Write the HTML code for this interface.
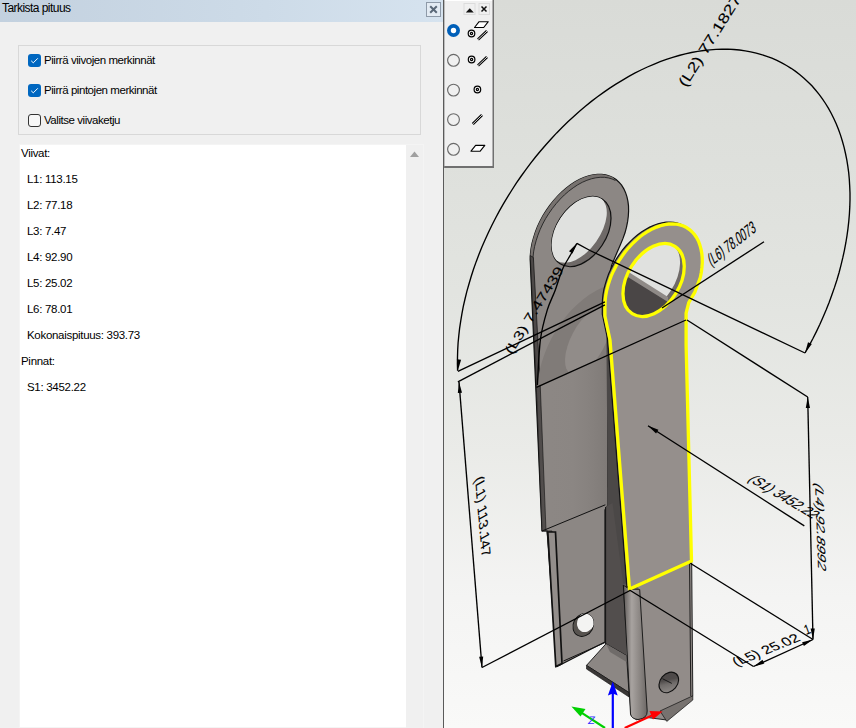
<!DOCTYPE html>
<html><head><meta charset="utf-8">
<style>
html,body{margin:0;padding:0;width:856px;height:728px;overflow:hidden;background:#f0f0f0;font-family:"Liberation Sans",sans-serif;}
.abs{position:absolute;}
#title{left:0;top:0;width:443px;height:22px;background:linear-gradient(90deg,#c3d1df 0%,#cddbe8 60%,#d6e3ef 100%);}
#title span{position:absolute;left:2px;top:1px;font-size:12px;color:#000;letter-spacing:-0.55px;}
#closeb{left:426px;top:2px;width:15px;height:15px;box-sizing:border-box;border:1px solid #8e9aa8;background:#e3ebf3;}
.txt{position:absolute;font-size:11.5px;color:#000;white-space:nowrap;letter-spacing:-0.3px;}
#grp{left:18px;top:45px;width:403px;height:90px;box-sizing:border-box;border:1px solid #d8d8d8;}
.cb{position:absolute;left:28px;width:13px;height:13px;box-sizing:border-box;border-radius:3px;}
.cb.on{background:#0067c0;}
.cb.off{border:1px solid #333;background:#f7f7f7;}
#list{left:19px;top:144px;width:405px;height:584px;background:#fff;box-sizing:border-box;border:1px solid #f4f4f4;}
#sb{left:406px;top:145px;width:17px;height:583px;background:#f0f0f0;}
#divider{left:443px;top:0;width:1px;height:728px;background:#5a5a5a;}
#view{left:444px;top:0;width:412px;height:728px;background:linear-gradient(180deg,#d9dbd7 0%,#e2e4e0 40%,#eaebe8 62%,#f4f4f3 82%,#f9f9f8 100%);overflow:hidden;}
#tb{left:444px;top:0;width:50px;height:168px;}
</style></head><body>
<div id="title" class="abs"><span>Tarkista pituus</span></div>
<div id="closeb" class="abs"><svg width="14" height="14" style="position:absolute;left:0;top:0"><path d="M3.2 3.2L9.8 9.8M9.8 3.2L3.2 9.8" stroke="#5a6878" stroke-width="2"/></svg></div>

<div id="grp" class="abs"></div>
<div class="cb on" style="top:54px"><svg width="13" height="13" style="position:absolute;left:0;top:0"><path d="M3.2 6.8L5.3 8.8L9.8 4.3" fill="none" stroke="#fff" stroke-width="1"/></svg></div>
<div class="txt" style="left:44px;top:54px;letter-spacing:-0.45px">Piirrä viivojen merkinnät</div>
<div class="cb on" style="top:84px"><svg width="13" height="13" style="position:absolute;left:0;top:0"><path d="M3.2 6.8L5.3 8.8L9.8 4.3" fill="none" stroke="#fff" stroke-width="1"/></svg></div>
<div class="txt" style="left:44px;top:84px;letter-spacing:-0.45px">Piirrä pintojen merkinnät</div>
<div class="cb off" style="top:114px"></div>
<div class="txt" style="left:44px;top:114px;letter-spacing:-0.45px">Valitse viivaketju</div>

<div id="list" class="abs"></div>
<div id="sb" class="abs"><svg width="17" height="20" style="position:absolute;left:0;top:0"><path d="M4 12L8.5 6.5L13 12Z" fill="#a0a0a0"/></svg></div>
<div class="txt" style="left:21px;top:147px">Viivat:</div>
<div class="txt" style="left:27px;top:173px">L1: 113.15</div>
<div class="txt" style="left:27px;top:199px">L2: 77.18</div>
<div class="txt" style="left:27px;top:225px">L3: 7.47</div>
<div class="txt" style="left:27px;top:251px">L4: 92.90</div>
<div class="txt" style="left:27px;top:277px">L5: 25.02</div>
<div class="txt" style="left:27px;top:303px">L6: 78.01</div>
<div class="txt" style="left:27px;top:329px">Kokonaispituus: 393.73</div>
<div class="txt" style="left:21px;top:355px">Pinnat:</div>
<div class="txt" style="left:27px;top:381px">S1: 3452.22</div>

<div id="divider" class="abs"></div>
<div id="view" class="abs">
<svg id="model" width="412" height="728" viewBox="444 0 412 728" style="position:absolute;left:0;top:0">
<defs><linearGradient id="cyl" x1="0" x2="1" y1="0" y2="0"><stop offset="0" stop-color="#5e5a58"/><stop offset="0.35" stop-color="#a8a3a0"/><stop offset="0.7" stop-color="#8a8582"/><stop offset="1" stop-color="#6c6765"/></linearGradient></defs>
<path d="M542 531 L530.2 259.5 L530.2 259.5 L530.4 254.3 L531.0 248.9 L532.0 243.4 L533.5 237.8 L535.3 232.2 L537.5 226.6 L540.1 221.0 L543.0 215.6 L546.3 210.4 L549.8 205.4 L553.6 200.6 L557.6 196.1 L561.8 191.9 L566.1 188.2 L570.6 184.8 L575.1 181.8 L579.7 179.3 L584.3 177.3 L588.8 175.8 L593.2 174.8 L597.6 174.3 L601.7 174.3 L605.7 174.9 L609.5 176.0 L612.9 177.5 L616.1 179.6 L619.0 182.2 L621.6 185.2 L623.7 188.6 L625.5 192.4 L626.9 196.6 L627.9 201.1 L628.5 205.9 L628.6 211.0 L628.3 216.3 L627.6 221.7 L626.5 227.2 L625.0 232.8 L623.0 238.4 L620.7 244.0 L615.6 255.7 L611.5 265.6 L608.0 285.0 L608.0 380.0 L607.8 505.0 L605.0 510.0 L605.0 642.0 L557.0 666.6 L548.0 540.0 L547.0 531.0Z" fill="#8c8784" stroke="#111" stroke-width="1.2"/>
<path d="M530.2 259.5 L530.2 259.5 L530.4 254.3 L531.0 248.9 L532.0 243.4 L533.5 237.8 L535.3 232.2 L537.5 226.6 L540.1 221.0 L543.0 215.6 L546.3 210.4 L549.8 205.4 L553.6 200.6 L557.6 196.1 L561.8 191.9 L566.1 188.2 L570.6 184.8 L575.1 181.8 L579.7 179.3 L584.3 177.3 L588.8 175.8 L593.2 174.8 L597.6 174.3 L601.7 174.3 L605.7 174.9 L609.5 176.0 L612.9 177.5 L615.5 180.5 L612.1 179.0 L608.3 177.9 L604.3 177.3 L600.2 177.3 L595.8 177.8 L591.4 178.8 L586.9 180.3 L582.3 182.3 L577.7 184.8 L573.2 187.8 L568.7 191.2 L564.4 194.9 L560.2 199.1 L556.2 203.6 L552.4 208.4 L548.9 213.4 L545.6 218.6 L542.7 224.0 L540.1 229.6 L537.9 235.2 L536.1 240.8 L534.6 246.4 L533.6 251.9 L533.0 257.3 L532.8 262.5Z" fill="#77726f"/>
<path d="M532.8 262.5 L532.8 262.5 L533.0 257.3 L533.6 251.9 L534.6 246.4 L536.1 240.8 L537.9 235.2 L540.1 229.6 L542.7 224.0 L545.6 218.6 L548.9 213.4 L552.4 208.4 L556.2 203.6 L560.2 199.1 L564.4 194.9 L568.7 191.2 L573.2 187.8 L577.7 184.8 L582.3 182.3 L586.9 180.3 L591.4 178.8 L595.8 177.8 L600.2 177.3 L604.3 177.3 L608.3 177.9 L612.1 179.0 L615.5 180.5" fill="none" stroke="#222" stroke-width="0.9"/>
<path d="M530.2 255.5 L536 380 L542 531 L546 531 L540 380 L533.4 257.5 Z" fill="#4d4948" stroke="#111" stroke-width="0.7"/>
<path d="M547 531 L556.5 666 L560.5 665 L552 531Z" fill="#55514f" stroke="#111" stroke-width="0.7"/>
<defs><linearGradient id="bpg" x1="0" x2="1" y1="0" y2="0"><stop offset="0" stop-color="#8d8885" stop-opacity="0"/><stop offset="0.5" stop-color="#8a8582" stop-opacity="0.5"/><stop offset="1" stop-color="#7f7a77"/></linearGradient></defs>
<path d="M537 387 L608 355 L608 505 L542 531Z" fill="url(#bpg)"/>
<path d="M542 531 L605.3 504.8" stroke="#111" stroke-width="1"/>
<path d="M607.5 290 L608 505" stroke="#111" stroke-width="1.1"/>
<clipPath id="bpc"><path d="M534 255 L608 285 L608 354.5 L536.4 387.3Z"/></clipPath>
<g clip-path="url(#bpc)"><ellipse cx="603" cy="365" rx="88" ry="58" transform="rotate(-62 603 365)" fill="#807b78"/><ellipse cx="588" cy="341" rx="37" ry="17" transform="rotate(-62 588 341)" fill="#918c89"/></g>
<ellipse cx="581.3" cy="231.6" rx="38.6" ry="24.9" transform="rotate(-56.7 581.3 231.6)" fill="#6f6a68" stroke="#111" stroke-width="1.2"/>
<clipPath id="bhc"><ellipse cx="581.3" cy="231.6" rx="38.6" ry="24.9" transform="rotate(-56.7 581.3 231.6)"/></clipPath>
<g clip-path="url(#bhc)"><ellipse cx="578.6" cy="229.3" rx="38.2" ry="21.5" transform="rotate(-54.7 578.6 229.3)" fill="#e0e1df"/></g>
<path d="M547.8 532 L555.8 666.5 L562 663.5 L555.5 532Z" fill="#938e8b" stroke="#111" stroke-width="1.7"/>
<path d="M563.5 661 L605.6 642.3" stroke="#111" stroke-width="1"/>
<ellipse cx="583.3" cy="625" rx="10" ry="11.8" transform="rotate(28 583.3 625)" fill="#57534f" stroke="#111" stroke-width="0.9"/>
<clipPath id="bsh"><ellipse cx="583.3" cy="625" rx="10" ry="11.8" transform="rotate(28 583.3 625)"/></clipPath>
<g clip-path="url(#bsh)"><ellipse cx="586" cy="622" rx="8.5" ry="10.5" transform="rotate(28 586 622)" fill="#f3f3f2"/></g>
<path d="M606 290 L612 380 L627 560 L629.5 589 L623.4 585.2 L626.6 655.7 L605.6 644 L605.6 507 L607.8 505 Z" fill="#4b4847"/>
<path d="M605.6 507 L612.5 503 L623.4 585.2 L626.6 655.7 L605.6 644 Z" fill="#524e4d"/>
<path d="M605.6 507 L605.6 644" stroke="#111" stroke-width="1"/>
<path d="M606 643.8 L626.6 655.7 L629 692.6 L586.5 665.4 Z" fill="#8c8784" stroke="#111" stroke-width="0.9"/>
<path d="M606 643.8 L626.6 655.7 L626.6 662 L610 652 Z" fill="#6f6b69"/>
<path d="M586.5 665.4 L629 692.6 L629 697 L586.5 669 Z" fill="#3a3736" stroke="#111" stroke-width="0.6"/>
<path d="M623.4 585.2 L629.5 589 L691.7 561 L692.8 695.8 L666.8 720 L647.2 717.5 L636.4 719.7 L631 715.3Z" fill="#928c89" stroke="#111" stroke-width="0.9"/>
<path d="M689.5 562 L690.8 696" stroke="#111" stroke-width="0.9"/>
<path d="M623.4 585.2 L629.5 589 L639.7 589.5 L647.2 711 Q647.5 718.5 638 719.5 Q631.5 719 630.5 714Z" fill="url(#cyl)" stroke="#111" stroke-width="0.9"/>
<path d="M622.3 584 L629.5 589 L639.7 589.5 L633 583Z" fill="#5a5654"/>
<defs><linearGradient id="flg" x1="0" y1="1" x2="1" y2="0"><stop offset="0" stop-color="#9a9592"/><stop offset="0.45" stop-color="#6f6b69"/><stop offset="0.6" stop-color="#4f4b4a"/><stop offset="1" stop-color="#4a4646"/></linearGradient></defs>
<ellipse cx="668.8" cy="682.4" rx="11.3" ry="8.6" transform="rotate(-50 668.8 682.4)" fill="url(#flg)" stroke="#111" stroke-width="1.1"/>
<path d="M662.5 678.7 L671.8 683.4" stroke="#111" stroke-width="0.9"/>
<path d="M660 711 L692.8 695.8 L692.8 700 L666.8 721.4 Z" fill="#77726f" stroke="#111" stroke-width="0.7"/>
<path d="M629.5 589 L610 340 L604.9 316.0 L604.9 306.0 L605.1 301.2 L605.6 296.3 L606.5 291.2 L607.8 286.1 L609.4 281.0 L611.2 275.9 L613.5 270.9 L616.0 266.0 L618.7 261.1 L621.8 256.5 L625.0 252.0 L628.5 247.8 L632.2 243.9 L636.0 240.2 L640.0 236.8 L644.0 233.8 L648.1 231.2 L652.3 228.9 L656.5 227.1 L660.6 225.6 L664.7 224.6 L668.7 224.0 L672.6 223.9 L676.4 224.2 L680.0 224.9 L683.4 226.0 L686.6 227.6 L689.5 229.6 L692.2 232.0 L694.6 234.7 L696.7 237.8 L698.5 241.3 L699.9 245.1 L701.0 249.1 L701.8 253.4 L702.2 257.9 L702.3 262.6 L701.9 267.5 L701.3 272.5 L700.3 277.5 L695.0 291.8 L688.8 302.5 L686.1 313.2 L686.1 345.0 L691.5 561.0Z" fill="#7f7a77" stroke="#111" stroke-width="1.2" transform="translate(-2.6 -1.8)"/>
<path d="M629.5 589 L610 340 L604.9 316.0 L604.9 306.0 L605.1 301.2 L605.6 296.3 L606.5 291.2 L607.8 286.1 L609.4 281.0 L611.2 275.9 L613.5 270.9 L616.0 266.0 L618.7 261.1 L621.8 256.5 L625.0 252.0 L628.5 247.8 L632.2 243.9 L636.0 240.2 L640.0 236.8 L644.0 233.8 L648.1 231.2 L652.3 228.9 L656.5 227.1 L660.6 225.6 L664.7 224.6 L668.7 224.0 L672.6 223.9 L676.4 224.2 L680.0 224.9 L683.4 226.0 L686.6 227.6 L689.5 229.6 L692.2 232.0 L694.6 234.7 L696.7 237.8 L698.5 241.3 L699.9 245.1 L701.0 249.1 L701.8 253.4 L702.2 257.9 L702.3 262.6 L701.9 267.5 L701.3 272.5 L700.3 277.5 L695.0 291.8 L688.8 302.5 L686.1 313.2 L686.1 345.0 L691.5 561.0Z" fill="#958f8c" stroke="none"/>
<clipPath id="fhc"><ellipse cx="653.6" cy="280.0" rx="39.9" ry="26.0" transform="rotate(-57.6 653.6 280.0)"/></clipPath>
<ellipse cx="653.6" cy="280.0" rx="39.9" ry="26.0" transform="rotate(-57.6 653.6 280.0)" fill="#6f6a68"/>
<g clip-path="url(#fhc)"><ellipse cx="651.1" cy="278.0" rx="39.4" ry="23.5" transform="rotate(-57.6 651.1 278.0)" fill="#e0e1df"/><path d="M600 271 L627 273 L668 299 L668 340 L600 340Z" fill="#4a4646"/><path d="M600 268 L627 271 L668 297 L668 302 L627 276.5 L600 274Z" fill="#8f8a87"/></g>
<ellipse cx="653.6" cy="280.0" rx="39.9" ry="26.0" transform="rotate(-57.6 653.6 280.0)" fill="none" stroke="#ffff00" stroke-width="3.3" stroke-linejoin="round"/>
<path d="M629.5 589 L610 340 L604.9 316.0 L604.9 306.0 L605.1 301.2 L605.6 296.3 L606.5 291.2 L607.8 286.1 L609.4 281.0 L611.2 275.9 L613.5 270.9 L616.0 266.0 L618.7 261.1 L621.8 256.5 L625.0 252.0 L628.5 247.8 L632.2 243.9 L636.0 240.2 L640.0 236.8 L644.0 233.8 L648.1 231.2 L652.3 228.9 L656.5 227.1 L660.6 225.6 L664.7 224.6 L668.7 224.0 L672.6 223.9 L676.4 224.2 L680.0 224.9 L683.4 226.0 L686.6 227.6 L689.5 229.6 L692.2 232.0 L694.6 234.7 L696.7 237.8 L698.5 241.3 L699.9 245.1 L701.0 249.1 L701.8 253.4 L702.2 257.9 L702.3 262.6 L701.9 267.5 L701.3 272.5 L700.3 277.5 L695.0 291.8 L688.8 302.5 L686.1 313.2 L686.1 345.0 L691.5 561.0Z" fill="none" stroke="#ffff00" stroke-width="3.3" stroke-linejoin="round"/>
<path d="M457.6 370.8 L457.4 363.9 L457.5 357.0 L457.7 349.9 L458.1 342.8 L458.8 335.6 L459.6 328.4 L460.7 321.1 L461.9 313.8 L463.3 306.4 L465.0 299.0 L466.8 291.6 L468.9 284.2 L471.1 276.8 L473.5 269.3 L476.1 261.9 L478.9 254.5 L481.9 247.1 L485.1 239.8 L488.4 232.5 L491.9 225.2 L495.6 218.0 L499.4 210.9 L503.4 203.8 L507.6 196.9 L511.9 190.0 L516.3 183.2 L520.9 176.5 L525.7 169.9 L530.5 163.4 L535.5 157.0 L540.7 150.8 L545.9 144.7 L551.3 138.7 L556.7 132.9 L562.3 127.3 L567.9 121.7 L573.7 116.4 L579.5 111.2 L585.4 106.3 L591.4 101.4 L597.5 96.8 L603.6 92.4 L609.7 88.1 L615.9 84.1 L622.2 80.3 L628.4 76.6 L634.7 73.2 L641.0 70.0 L647.4 67.0 L653.7 64.3 L660.1 61.7 L666.4 59.4 L672.7 57.4 L679.0 55.5 L685.3 53.9 L691.5 52.5 L697.7 51.4 L703.9 50.5 L710.0 49.8 L716.0 49.4 L722.0 49.2 L727.9 49.2 L733.8 49.5 L739.5 50.0 L745.2 50.8 L750.7 51.8 L756.2 53.1 L761.5 54.6 L766.8 56.3 L771.9 58.2 L776.9 60.4 L781.8 62.8 L786.5 65.5 L791.1 68.3 L795.6 71.4 L799.9 74.7 L804.0 78.2 L808.0 81.9 L811.9 85.8 L815.5 90.0 L819.1 94.3 L822.4 98.8 L825.5 103.5 L828.5 108.4 L831.3 113.5 L833.9 118.7 L836.3 124.1 L838.6 129.7 L840.6 135.4 L842.4 141.3 L844.1 147.3 L845.5 153.5 L846.8 159.8 L847.8 166.2 L848.7 172.7 L849.3 179.3 L849.7 186.1 L850.0 192.9 L850.0 199.9 L849.8 206.9 L849.4 214.0 L848.8 221.1 L848.0 228.4 L847.0 235.6 L845.8 243.0 L844.4 250.3 L842.8 257.7 L841.0 265.1 L839.1 272.5 L836.9 280.0 L834.5 287.4 L831.9 294.8 L829.2 302.2 L826.3 309.6 L823.1 317.0 L819.9 324.3 L816.4 331.6 L812.8 338.8 L809.0 345.9 L805.0 353.0" fill="none" stroke="#000" stroke-width="1.35"/>
<path d="M457.9 370.4 L461.1 359.7 L456.9 359.2 Z" fill="#000"/>
<path d="M805.0 353.0 L811.8 344.1 L808.0 342.2 Z" fill="#000"/>
<path d="M457.9 371.4 L604.9 301.9" fill="none" stroke="#000" stroke-width="1.35"/>
<path d="M457.9 381.8 L604.9 304.9" fill="none" stroke="#000" stroke-width="1.35"/>
<path d="M805.0 353.0 L590.0 250.5 L576.9 243.3" fill="none" stroke="#000" stroke-width="1.35"/>
<path d="M537.4 385.0 C537.9 377.4 538.8 352.2 540.4 339.7 C542.0 327.2 544.8 318.2 547.3 309.9 C549.8 301.6 552.8 296.8 555.3 290.0 C557.8 283.2 559.8 275.4 562.4 269.4 C565.0 263.4 568.6 258.4 571.0 254.0 C573.4 249.7 575.9 245.1 576.9 243.3" fill="none" stroke="#000" stroke-width="1.35"/>
<path d="M576.9 243.3 L569.0 251.2 L572.5 253.6 Z" fill="#000"/>
<path d="M536.4 387.3 L686.0 320.0" fill="none" stroke="#000" stroke-width="1.35"/>
<path d="M764.0 241.7 L662.0 308.0" fill="none" stroke="#000" stroke-width="1.35"/>
<path d="M687.0 320.0 L807.7 397.0" fill="none" stroke="#000" stroke-width="1.35"/>
<path d="M807.7 397.0 L813.0 639.5" fill="none" stroke="#000" stroke-width="1.35"/>
<path d="M807.7 397.0 L805.8 408.0 L810.0 408.0 Z" fill="#000"/>
<path d="M813.0 639.5 L814.8 628.4 L810.6 628.6 Z" fill="#000"/>
<path d="M459.0 382.0 L482.0 667.5" fill="none" stroke="#000" stroke-width="1.35"/>
<path d="M459.0 382.0 L457.8 393.1 L462.0 392.8 Z" fill="#000"/>
<path d="M482.0 667.5 L483.2 656.4 L479.1 656.7 Z" fill="#000"/>
<path d="M482.0 667.5 L630.0 590.5" fill="none" stroke="#000" stroke-width="1.35"/>
<path d="M629.5 590.0 L753.5 666.5" fill="none" stroke="#000" stroke-width="1.35"/>
<path d="M690.3 563.2 L813.0 639.5" fill="none" stroke="#000" stroke-width="1.35"/>
<path d="M753.5 666.5 L813.0 639.5" fill="none" stroke="#000" stroke-width="1.35"/>
<path d="M753.5 666.5 L764.3 663.6 L762.5 659.8 Z" fill="#000"/>
<path d="M813.0 639.5 L802.1 642.2 L803.9 646.0 Z" fill="#000"/>
<path d="M648.0 425.7 L804.3 525.9" fill="none" stroke="#000" stroke-width="1.35"/>
<path d="M648.0 425.7 L656.1 433.4 L658.4 429.8 Z" fill="#000"/>
<text x="0" y="0" font-size="12" fill="#000" stroke="#000" stroke-width="0.08" transform="matrix(0.8179 -1.3089 1.0179 0.6360 686.0 88.0)">(L2) 77.1827</text>
<text x="0" y="0" font-size="12" fill="#000" stroke="#000" stroke-width="0.08" transform="matrix(0.7680 -1.2533 0.9588 0.5098 512.0 355.0)">(L3) 7.47439</text>
<text x="0" y="0" font-size="12" fill="#000" stroke="#000" stroke-width="0.08" transform="matrix(0.6736 -0.5225 0.5267 1.3037 711.0 266.5)">(L6) 78.0073</text>
<text x="0" y="0" font-size="12" fill="#000" stroke="#000" stroke-width="0.08" transform="matrix(0.9422 0.5594 -1.1187 0.6459 747.0 480.0)">(S1) 3452.22</text>
<text x="0" y="0" font-size="12" fill="#000" stroke="#000" stroke-width="0.08" transform="matrix(0.0441 1.2634 -0.9798 -0.5887 815.0 482.0)">(L4) 92.8992</text>
<text x="0" y="0" font-size="12" fill="#000" stroke="#000" stroke-width="0.08" transform="matrix(0.1038 1.1870 -1.0498 0.5819 475.0 479.0)">(L1) 113.147</text>
<text x="0" y="0" font-size="12" fill="#000" stroke="#000" stroke-width="0.08" transform="matrix(0.8338 -0.3369 0.3910 1.0742 806.0 635.0)">1</text>
<text x="0" y="0" font-size="12" fill="#000" stroke="#000" stroke-width="0.08" transform="matrix(1.1868 -0.4795 0.7500 0.8627 736.5 666.5)">(L5) 25.02</text>
<path d="M612.8 728 L612.8 692" stroke="#0000ff" stroke-width="2.2"/><path d="M612.8 681.4 L607.9 695.5 L612.8 693.5 L617.7 695.5Z" fill="#0000ff"/>
<path d="M605 728 L581 712.3" stroke="#00d000" stroke-width="2.2"/><path d="M571.4 706.6 L585.5 709 L580.5 716.5Z" fill="#00d000"/>
<path d="M624.7 728 L653 715" stroke="#ff0000" stroke-width="2.2"/><path d="M662.6 711.6 L649.5 711 L653 719.5Z" fill="#ff0000"/>
<text x="0" y="0" font-size="11" fill="#3030ff" transform="matrix(1 0 -0.2 1 587.5 723.5)">Z</text>
</svg>
</div>
<div id="tb" class="abs"><svg width="50" height="168" viewBox="444 0 50 168" style="position:absolute;left:0;top:0"><rect x="444" y="0" width="50" height="168" fill="#f0f0f0"/><rect x="444" y="0" width="50" height="1" fill="#fff"/><rect x="492.5" y="0" width="1.8" height="168" fill="#707070"/><rect x="444" y="166" width="50" height="2" fill="#707070"/><rect x="443.5" y="0" width="1" height="168" fill="#8a8a8a"/><rect x="464" y="3.5" width="11" height="11" fill="none" stroke="#dcdcdc" stroke-width="1"/><path d="M465.8 12.6L469.8 8.3L473.8 12.6Z" fill="#111"/><rect x="479" y="3.5" width="10.5" height="11" fill="none" stroke="#dcdcdc" stroke-width="1"/><path d="M481.5 6.5L486.5 11.5M486.5 6.5L481.5 11.5" stroke="#111" stroke-width="1.5"/><g transform="translate(444 0)"><circle cx="9.5" cy="30.5" r="6.5" fill="#005fb8"/><circle cx="9.5" cy="30.5" r="2.7" fill="#fff"/><circle cx="9.5" cy="60.3" r="5.9" fill="none" stroke="#6a6a6a" stroke-width="1.15"/><circle cx="9.5" cy="90.1" r="5.9" fill="none" stroke="#6a6a6a" stroke-width="1.15"/><circle cx="9.5" cy="119.6" r="5.9" fill="none" stroke="#6a6a6a" stroke-width="1.15"/><circle cx="9.5" cy="149.3" r="5.9" fill="none" stroke="#6a6a6a" stroke-width="1.15"/></g><path d="M474.5 27.5L479.1 21.7L488.3 21.7L483.7 27.5Z" fill="#fff" stroke="#000" stroke-width="1.1" stroke-linejoin="round"/><circle cx="471.5" cy="33.5" r="3.3" fill="none" stroke="#000" stroke-width="1.2"/><circle cx="471.5" cy="33.5" r="1.1" fill="none" stroke="#000" stroke-width="1.2"/><path d="M478 39.5L487 31" stroke="#000" stroke-width="2.7"/><path d="M478 39.5L487 31" stroke="#f0f0f0" stroke-width="0.9"/><circle cx="471.6" cy="59.5" r="3.3" fill="none" stroke="#000" stroke-width="1.2"/><circle cx="471.6" cy="59.5" r="1.1" fill="none" stroke="#000" stroke-width="1.2"/><path d="M478 65.5L487 57" stroke="#000" stroke-width="2.7"/><path d="M478 65.5L487 57" stroke="#f0f0f0" stroke-width="0.9"/><circle cx="477.4" cy="89.5" r="3.3" fill="none" stroke="#000" stroke-width="1.2"/><circle cx="477.4" cy="89.5" r="1.1" fill="none" stroke="#000" stroke-width="1.2"/><path d="M472.8 124L482 115" stroke="#000" stroke-width="2.7"/><path d="M472.8 124L482 115" stroke="#f0f0f0" stroke-width="0.9"/><path d="M471 151.2L475.6 145.39999999999998L484.8 145.39999999999998L480.2 151.2Z" fill="#fff" stroke="#000" stroke-width="1.1" stroke-linejoin="round"/></svg></div>
</body></html>
